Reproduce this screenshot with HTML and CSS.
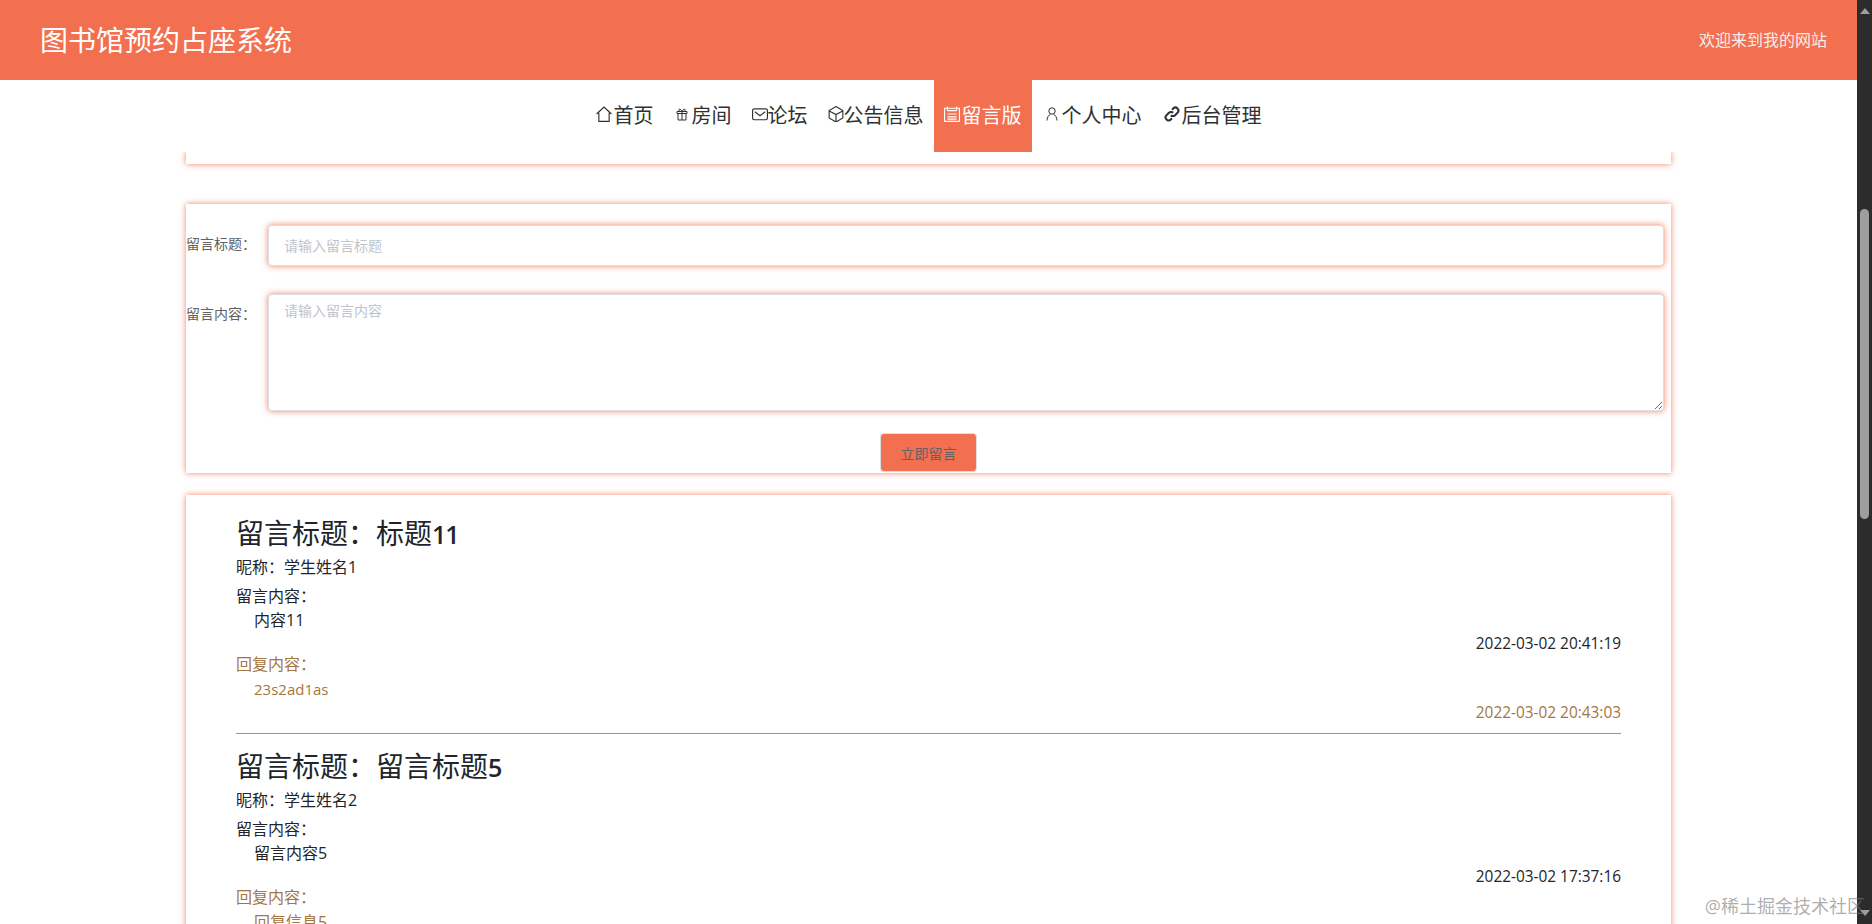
FILE: index.html
```html
<!DOCTYPE html>
<html lang="zh-CN">
<head>
    <meta charset="UTF-8">
    <meta name="viewport" content="width=device-width, initial-scale=1.0">
    <title>图书馆预约占座系统</title>
    <link rel="stylesheet" href="styles.css">
</head>
<body>
    <div class="page">
        <header class="top-bar">
            <h1 class="site-name">图书馆预约占座系统</h1>
            <span class="welcome">欢迎来到我的网站</span>
        </header>

        <nav class="main-nav">
            <a class="nav-item" href="#">
                <svg class="nav-icon" viewBox="1 1 14 14"><path d="M1.500 8 8 2l6.500 6M3.500 7v7.500h9V7"/></svg>
                首页
            </a>
            <a class="nav-item" href="#">
                <svg class="nav-icon" viewBox="0 0 16 16"><path d="M4 7.500V14h8V7.500M3 5.500h10v2H3zM8 5.500V14M8 5.500C6 5.500 4.500 4.800 5 3.500 5.500 2.500 7.500 3.500 8 5.500c.5-2 2.500-3 3-2 .5 1.300-1 2-3 2"/></svg>
                房间
            </a>
            <a class="nav-item nav-item-tight" href="#">
                <svg class="nav-icon" viewBox="1 1 14 14"><rect x="1.500" y="3.500" width="13" height="9.500" rx="1.500"/><path d="m3.500 6 4.500 3.500L12.500 6"/></svg>
                论坛
            </a>
            <a class="nav-item nav-item-tight" href="#">
                <svg class="nav-icon" viewBox="1 1 14 14"><path d="M8 1.500 14 5v6.500L8 15l-6-3.500V5zM2.500 5.500 8 8.500l5.500-3M8 8.500V15"/></svg>
                公告信息
            </a>
            <a class="nav-item is-active" href="#">
                <svg class="nav-icon" viewBox="1 1 14 14"><path d="M1.500 3h13v11.500h-13zM4 1.500V5M12 1.500V5M4 5h8M4 8h8M4 10.500h8M4 12.500h8"/></svg>
                留言版
            </a>
            <a class="nav-item" href="#">
                <svg class="nav-icon nav-icon-wide" viewBox="-2 0 18 16"><circle cx="8" cy="5" r="3.200"/><path d="M3 14.500c0-3.500 2-5.500 3.500-6.300M13 14.500c0-3.500-2-5.500-3.500-6.300"/></svg>
                个人中心
            </a>
            <a class="nav-item" href="#">
                <svg class="nav-icon nav-icon-wide nav-icon-bold" viewBox="-2 0 18 16"><path d="M6.800 9.200a3 3 0 0 0 4.300 0l2.400-2.400a3 3 0 0 0-4.300-4.300L8 3.700M9.200 6.800a3 3 0 0 0-4.300 0L2.500 9.200a3 3 0 0 0 4.300 4.300L8 12.300"/></svg>
                后台管理
            </a>
        </nav>

        <main class="content">
            <div class="card card-stub"></div>

            <form class="card message-form">
                <div class="form-row">
                    <label class="form-label">留言标题：</label>
                    <input class="form-input" type="text" placeholder="请输入留言标题">
                </div>
                <div class="form-row">
                    <label class="form-label">留言内容：</label>
                    <textarea class="form-textarea" placeholder="请输入留言内容"></textarea>
                </div>
                <div class="form-actions">
                    <button class="submit-button" type="button">立即留言</button>
                </div>
            </form>

            <section class="card message-list">
                <article class="message">
                    <h3 class="message-title">留言标题：标题<b>11</b></h3>
                    <div class="message-author">昵称：学生姓名1</div>
                    <div class="message-label">留言内容：</div>
                    <div class="message-body">内容11</div>
                    <div class="message-time">2022-03-02 20:41:19</div>
                    <div class="reply">
                        <div class="reply-label">回复内容：</div>
                        <div class="message-body message-body-latin">23s2ad1as</div>
                        <div class="message-time">2022-03-02 20:43:03</div>
                    </div>
                </article>
                <article class="message">
                    <h3 class="message-title">留言标题：留言标题<b>5</b></h3>
                    <div class="message-author">昵称：学生姓名2</div>
                    <div class="message-label">留言内容：</div>
                    <div class="message-body">留言内容5</div>
                    <div class="message-time">2022-03-02 17:37:16</div>
                    <div class="reply">
                        <div class="reply-label">回复内容：</div>
                        <div class="message-body">回复信息5</div>
                    </div>
                </article>
            </section>
        </main>
    </div>

    <div class="scrollbar">
        <span class="scroll-arrow scroll-arrow-up"></span>
        <span class="scroll-thumb"></span>
        <span class="scroll-arrow scroll-arrow-down"></span>
    </div>

    <div class="watermark">@稀土掘金技术社区</div>
</body>
</html>
```

FILE: styles.css
```css
html, body {
    height: 100%;
}

body {
    display: flex;
    height: 924px;
    margin: 0;
    overflow: hidden;
    background: #fff;
    font-family: "Open Sans", "Noto Sans CJK SC", sans-serif;
    color: #212529;
}

.page {
    flex: 1;
    min-width: 0;
    display: flex;
    flex-direction: column;
    overflow: hidden;
}

.top-bar {
    display: flex;
    align-items: center;
    justify-content: space-between;
    flex-shrink: 0;
    box-sizing: border-box;
    height: 80px;
    padding: 0 30px 3px 40px;
    background-color: #f2704f;
    color: #fff;
}

.site-name {
    margin: 0;
    font-size: 28px;
    font-weight: 400;
}

.welcome {
    font-size: 16px;
    color: #f5ecec;
}

.main-nav {
    position: relative;
    z-index: 2;
    display: flex;
    justify-content: center;
    flex-shrink: 0;
    height: 72px;
    background: #fff;
}

.nav-item {
    display: flex;
    align-items: center;
    padding: 0 10px 4px;
    font-size: 20px;
    color: #303133;
    text-decoration: none;
}

.nav-item.is-active {
    background-color: #f2704f;
    color: #fff;
}

.nav-icon {
    flex-shrink: 0;
    width: 16px;
    height: 16px;
    margin-right: 2px;
    fill: none;
    stroke: currentColor;
    stroke-width: 1;
}

.nav-item-tight .nav-icon {
    margin-right: 0;
}

.nav-icon-wide {
    width: 18px;
}

.nav-icon-bold {
    stroke-width: 2;
}

.content {
    flex: 1;
    padding: 0 186px;
}

.card {
    background: #fff;
    box-shadow: 0 0 6px rgba(243, 113, 80, 0.9);
}

.card-stub {
    height: 12px;
    margin-bottom: 40px;
}

.message-form {
    padding: 21px 7px 1px 0;
    margin-bottom: 22px;
}

.form-row {
    display: flex;
    margin-bottom: 28px;
}

.form-row:nth-child(2) {
    margin-bottom: 22px;
}

.form-label {
    flex: 0 0 82px;
    font-size: 14px;
    line-height: 38px;
    color: #606266;
}

.form-row:nth-child(2) .form-label {
    line-height: 40px;
}

.form-input,
.form-textarea {
    flex: 1;
    box-sizing: border-box;
    padding: 5px 15px;
    border: 1px solid #dcdfe6;
    border-radius: 4px;
    outline: none;
    background: #fff;
    font-family: inherit;
    font-size: 14px;
    line-height: 22px;
    color: #606266;
    box-shadow: 0 0 6px rgba(243, 113, 80, 0.9);
}

.form-input {
    height: 41px;
}

.form-textarea {
    height: 117px;
}

.form-input::placeholder,
.form-textarea::placeholder {
    color: #c0c4cc;
}

.form-actions {
    display: flex;
    justify-content: center;
    padding-left: 7px;
}

.submit-button {
    width: 97px;
    height: 39px;
    padding: 0;
    border: 1px solid #dcdfe6;
    border-radius: 4px;
    background-color: #f2704f;
    font-family: inherit;
    font-size: 14px;
    color: #606266;
}

.message-list {
    padding: 20px 50px 40px;
}

.message + .message {
    margin-top: 14px;
}

.message:first-child {
    padding-bottom: 10px;
    border-bottom: 1px solid #f2704f;
}

.message-title {
    height: 36px;
    margin: 0;
    font-size: 28px;
    font-weight: 400;
    line-height: 36px;
    color: #212529;
}

.message-title b {
    font-size: 25px;
    font-weight: 600;
    letter-spacing: -1px;
}

.message-author,
.message-label,
.reply-label,
.message-body {
    font-size: 16px;
    line-height: 20px;
}

.message-time {
    margin-top: 4px;
    font-size: 15.400px;
    line-height: 20px;
    text-align: right;
}

.message-author {
    margin-top: 6px;
}

.message-label {
    margin-top: 9px;
}

.message-body {
    margin-top: 4px;
    padding-left: 18px;
}

.reply {
    color: #a5763f;
}

.reply .message-body {
    margin-top: 5px;
}

.message-body-latin {
    font-size: 15px;
}

.scrollbar {
    display: flex;
    flex-direction: column;
    align-items: center;
    flex: 0 0 15px;
    background-color: #2c2c2c;
}

.scroll-arrow {
    width: 0;
    height: 0;
    border-left: 5px solid transparent;
    border-right: 5px solid transparent;
}

.scroll-arrow-up {
    margin-top: 8px;
    border-bottom: 6px solid #9e9e9e;
}

.scroll-thumb {
    width: 9px;
    height: 310px;
    margin-top: 195px;
    border-radius: 5px;
    background-color: #9e9e9e;
}

.scroll-arrow-down {
    margin-top: auto;
    margin-bottom: 8px;
    border-top: 6px solid #9e9e9e;
}

.watermark {
    position: absolute;
    right: 7px;
    bottom: 6px;
    z-index: 3;
    font-size: 18px;
    line-height: 24px;
    color: rgba(120, 120, 120, 0.6);
}
```
